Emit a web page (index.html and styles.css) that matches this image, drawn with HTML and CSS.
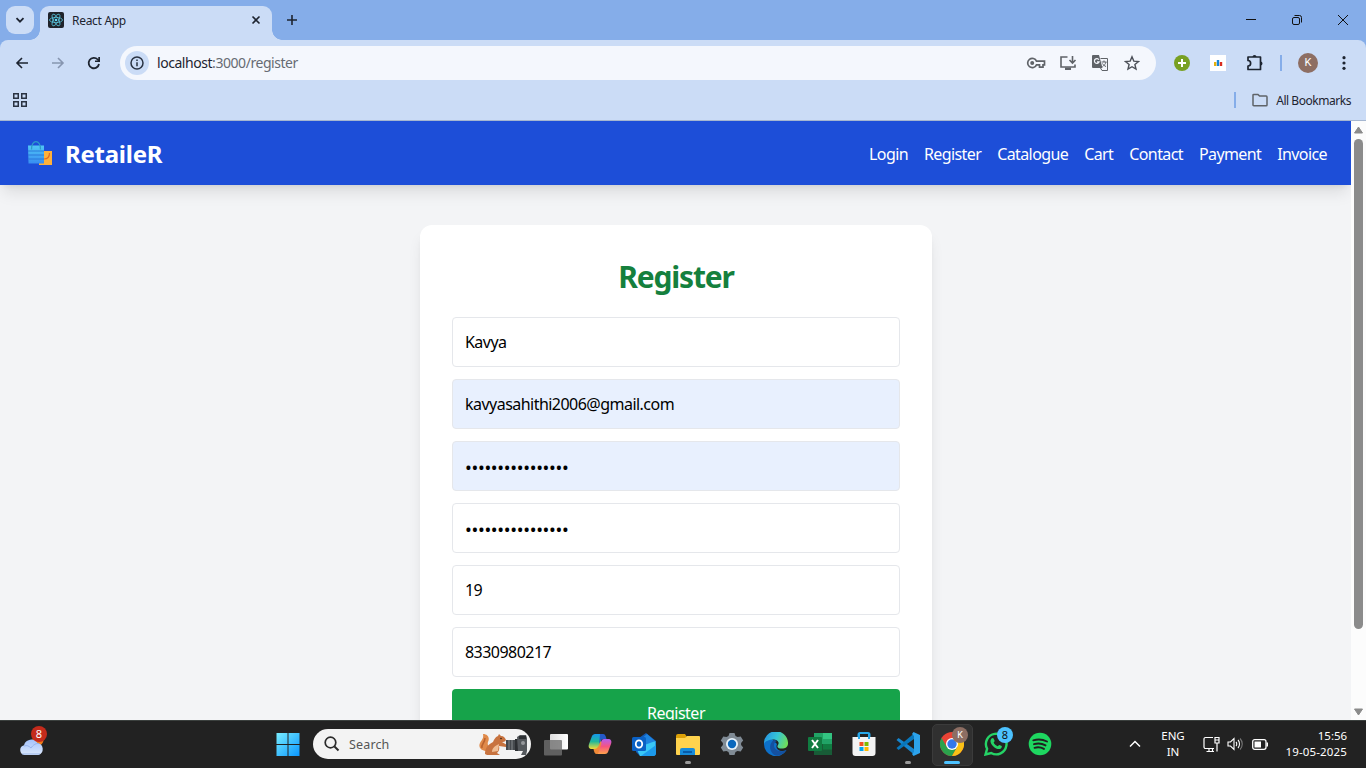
FILE: index.html
```html
<!DOCTYPE html>
<html lang="en">
<head>
<meta charset="utf-8">
<title>React App</title>
<link rel="stylesheet" href="styles.css">
</head>
<body>
<div class="desktop">
  <div class="tabstrip">
    <span class="tab-search"><svg width="10" height="10" viewBox="0 0 10 10"><path d="M1.500 3.200 5 6.700 8.500 3.200" fill="none" stroke="#1d2430" stroke-width="1.800"/></svg></span>
    <div class="tab">
      <svg width="16" height="16" viewBox="0 0 16 16"><rect width="16" height="16" rx="2" fill="#20232a"/><g fill="none" stroke="#58c4dc" stroke-width=".8"><ellipse cx="8" cy="8" rx="6.500" ry="2.600"/><ellipse cx="8" cy="8" rx="6.500" ry="2.600" transform="rotate(60 8 8)"/><ellipse cx="8" cy="8" rx="6.500" ry="2.600" transform="rotate(120 8 8)"/></g><circle cx="8" cy="8" r="1.300" fill="#61dafb"/></svg>
      <span class="tab-title">React App</span>
      <svg width="10" height="10" viewBox="0 0 10 10"><path d="m1.500 1.500 7 7m0-7-7 7" stroke="#1d2430" stroke-width="1.600"/></svg>
    </div>
    <svg class="new-tab" width="12" height="12" viewBox="0 0 12 12"><path d="M6 1v10M1 6h10" stroke="#1d2430" stroke-width="1.600"/></svg>
    <div class="window-controls">
      <svg width="12" height="12" viewBox="0 0 12 12"><path d="M1 5.500h10" stroke="#111"/></svg>
      <svg width="12" height="12" viewBox="0 0 12 12"><g fill="none" stroke="#111"><rect x="1.500" y="3.500" width="7" height="7" rx="1.500"/><path d="M3.500 1.500h5a2 2 0 0 1 2 2v5"/></g></svg>
      <svg width="12" height="12" viewBox="0 0 12 12"><path d="m1 1 10 10M11 1 1 11" stroke="#111"/></svg>
    </div>
  </div>

  <div class="toolbar">
    <div class="nav-buttons">
      <svg width="16" height="16" viewBox="0 0 16 16"><path d="M14 8H3m5-5L3 8l5 5" fill="none" stroke="#1d2430" stroke-width="1.600"/></svg>
      <svg width="16" height="16" viewBox="0 0 16 16"><path d="M2 8h11M8 3l5 5-5 5" fill="none" stroke="#8796b0" stroke-width="1.600"/></svg>
      <svg width="16" height="16" viewBox="0 0 16 16"><path d="M13 9a5.200 5.200 0 1 1-1.300-4.500L13 5.800" fill="none" stroke="#1d2430" stroke-width="1.800"/><path d="M14 2v5H9V5.400h3.300V2z" fill="#1d2430"/></svg>
    </div>
    <div class="omnibox">
      <span class="site-info"><svg width="16" height="16" viewBox="0 0 16 16"><circle cx="8" cy="8" r="6" fill="none" stroke="#2a3342" stroke-width="1.500"/><path d="M8 7.200v4M8 4.500v1.600" stroke="#2a3342" stroke-width="1.500"/></svg></span>
      <span class="url"><b>localhost</b>:3000/register</span>
      <div class="omnibox-actions">
        <svg width="20" height="16" viewBox="0 0 20 16"><g fill="none" stroke="#5f6368" stroke-width="1.700"><path d="M10.500 6.200A4.600 4.600 0 1 0 10.500 9.800h3v2.400H17V9.800h1.500V6.200z"/></g><circle cx="6.200" cy="8" r="2" fill="#5f6368"/></svg>
        <svg width="18" height="16" viewBox="0 0 18 16"><path d="M8.500 2H2v10h14V9.500M13.500 1v7m-3-3 3 3 3-3" fill="none" stroke="#5f6368" stroke-width="1.600"/><path d="M6 12.500h6V15H6z" fill="#5f6368"/></svg>
        <svg width="18" height="18" viewBox="0 0 18 18"><path d="M2 1h6l3.500 13H2a1 1 0 0 1-1-1V2a1 1 0 0 1 1-1z" fill="#5f6368"/><path d="M7.900 5.800a2.400 2.400 0 1 0 .200 2H6" fill="none" stroke="#f4f7fd" stroke-width="1.200"/><path d="M9.500 4.500h7v12H11L9.500 14M10.500 8h5M13 6.500V8m2 0c-.5 2-2 3.500-3.500 4.500M11.500 9.500c1 1.500 2 2.500 3.500 3" fill="none" stroke="#5f6368"/></svg>
        <svg width="16" height="16" viewBox="0 0 16 16"><path d="m8 1.800 1.800 4.300 4.700.4-3.600 3 1.100 4.600L8 11.700l-4 2.400 1.100-4.600-3.600-3 4.700-.4z" fill="none" stroke="#4c5058" stroke-width="1.400"/></svg>
      </div>
    </div>
    <div class="extensions">
      <svg width="16" height="16" viewBox="0 0 16 16"><circle cx="8" cy="8" r="8" fill="#78a022"/><path d="M8 4v8M4 8h8" stroke="#fff" stroke-width="2"/></svg>
      <svg width="16" height="16" viewBox="0 0 16 16"><path fill="#fff" d="M0 0h16v16H0z"/><path d="M5.200 7v4" stroke="#e7b10a" stroke-width="2.400"/><path d="M8 5v6" stroke="#1686d9" stroke-width="2.400"/><path d="M11 7v4" stroke="#d92d20" stroke-width="2.400"/></svg>
      <svg width="18" height="18" viewBox="0 0 18 18"><path d="M2 3h12.500v12.500H2v-3.500c3.500 0 3.500-5.500 0-5.500z" fill="none" stroke="#1d2430" stroke-width="1.700" stroke-linejoin="round"/><path d="M6.500 3a2 2 0 0 1 4 0zM14.500 7.500a2 2 0 0 1 0 4z" fill="#1d2430"/></svg>
      <i class="divider"></i>
      <span class="avatar">K</span>
      <svg width="16" height="16" viewBox="0 0 16 16" fill="#1d2430"><circle cx="8" cy="2.700" r="1.600"/><circle cx="8" cy="8" r="1.600"/><circle cx="8" cy="13.300" r="1.600"/></svg>
    </div>
  </div>

  <div class="bookmarks">
    <svg width="16" height="16" viewBox="0 0 16 16"><path d="M1.750 1.750h4.500v4.500h-4.500zM9.750 1.750h4.500v4.500h-4.500zM1.750 9.750h4.500v4.500h-4.500zM9.750 9.750h4.500v4.500h-4.500z" fill="none" stroke="#2a3342" stroke-width="1.500"/></svg>
    <div class="all-bookmarks">
      <i class="divider"></i>
      <svg width="16" height="14" viewBox="0 0 16 14"><path d="M1 12V2.200a.8.800 0 0 1 .8-.8h4.100l1.700 1.700h6.600a.8.800 0 0 1 .8.800V12a.8.800 0 0 1-.8.800H1.800A.8.800 0 0 1 1 12z" fill="none" stroke="#5f6368" stroke-width="1.500"/></svg>
      <span>All Bookmarks</span>
    </div>
  </div>

  <div class="viewport">
    <div class="page">
      <header class="site-header">
        <div class="brand">
          <svg width="26" height="26" viewBox="0 0 26 26"><defs><linearGradient id="bag" x1="0" y1="0" x2="0" y2="1"><stop stop-color="#51c7f5"/><stop offset="1" stop-color="#378df2"/></linearGradient></defs><path d="M12 11h13v14H12z" fill="#ffb13b"/><path d="M1 5.500h16v18H1.500z" fill="url(#bag)"/><path d="M4.500 9.500C4-1 14-1 13.500 9.500" fill="none" stroke="#2d9cc8" stroke-width="1.200"/><path d="M1 11h16M1 15h16M1 19h16" stroke="#2b79da"/><path d="M22.500 13c0 4-2 6-5.500 6" fill="none" stroke="#e06b26" stroke-width="1.200"/></svg>
          <span>RetaileR</span>
        </div>
        <nav class="site-nav"><a>Login</a><a>Register</a><a>Catalogue</a><a>Cart</a><a>Contact</a><a>Payment</a><a>Invoice</a></nav>
      </header>
      <main class="card">
        <h2>Register</h2>
        <div class="field">Kavya</div>
        <div class="field filled">kavyasahithi2006@gmail.com</div>
        <div class="field filled secret">••••••••••••••••</div>
        <div class="field secret">••••••••••••••••</div>
        <div class="field">19</div>
        <div class="field">8330980217</div>
        <div class="submit">Register</div>
      </main>
    </div>
    <div class="scrollbar">
      <svg width="9" height="8" viewBox="0 0 9 8"><path d="M4.500 1 8.500 7h-8z" fill="#8b8b8b" stroke="#8b8b8b" stroke-linejoin="round"/></svg>
      <i class="thumb"></i>
      <svg width="9" height="8" viewBox="0 0 9 8"><path d="M4.500 7 8.500 1h-8z" fill="#8b8b8b" stroke="#8b8b8b" stroke-linejoin="round"/></svg>
    </div>
  </div>

  <div class="taskbar">
    <div class="weather">
      <svg width="26" height="26" viewBox="0 0 26 26"><defs><linearGradient id="cloud" x1="0" y1="0" x2="0" y2="1"><stop stop-color="#a4c2fb"/><stop offset="1" stop-color="#dbe8fb"/></linearGradient></defs><circle cx="19" cy="9" r="5.500" fill="#ef7b18"/><path d="M5.500 24a5 5 0 0 1-.5-9.800A7.500 7.500 0 0 1 18.500 12a6.200 6.200 0 0 1 1 12z" fill="url(#cloud)"/><path d="M5 15c3-1 5 0 7 2 2-3 5-5 8-4.500M3 23h18" fill="none" stroke="#8ba9e6" stroke-width=".8"/></svg>
      <span class="badge red">8</span>
    </div>
    <div class="task start">
      <svg width="24" height="24" viewBox="0 0 24 24"><defs><linearGradient id="win" x1="0" y1="0" x2="24" y2="24" gradientUnits="userSpaceOnUse"><stop stop-color="#7cf0ff"/><stop offset="1" stop-color="#0895ff"/></linearGradient></defs><path d="M.5 1h11v11H.5zM12.500 1h11v11h-11zM.5 13h11v11H.5zM12.500 13h11v11h-11z" fill="url(#win)"/></svg>
    </div>
    <div class="search">
      <svg width="16" height="16" viewBox="0 0 16 16"><circle cx="6.500" cy="6.500" r="5.300" fill="none" stroke="#2b2b2b" stroke-width="1.700"/><path d="m10.500 10.500 4 4" stroke="#2b2b2b" stroke-width="2"/></svg>
      <span>Search</span>
      <svg class="squirrel" width="50" height="26" viewBox="0 0 50 26"><path d="M8 20C2 20-1 16 1 12c1-3 4-4 3-9 5 0 7 4 5 8-1 3 1 4 1 7z" fill="#e08a4a"/><path d="M3 17c-1-4 3-5 3-10" fill="none" stroke="#b9622e" stroke-width="1.500"/><path d="M6 23c0-5 2-9 8-12 1-2 2-5 5-6l1-2 2 2c3 0 4 2 5 4-1 2-3 2-4 2l5 3-1 2-7-1c1 4-1 6-2 7l3 2H8z" fill="#c8733f"/><path d="M13 21c0-4 3-6 7-8l-1 7z" fill="#f0bd93"/><circle cx="22" cy="7.500" r=".8" fill="#321"/><path d="M27 9h12v10H27z" fill="#45494d"/><path d="M30 9v10M33 9v10" stroke="#85898c"/><path d="M36 8h3v12h-3z" fill="#2c2f32"/><path d="M38 6l3-2h6l1 3v13l-1 4h-5l2-4h-5z" fill="#54585c"/><path d="M40 5h7v3h-7z" fill="#2d3033"/><circle cx="44" cy="12" r="2" fill="#96999c"/></svg>
    </div>
    <div class="task"><svg width="24" height="24" viewBox="0 0 24 24"><defs><linearGradient id="tv"><stop stop-color="#ddd"/><stop offset="1" stop-color="#fff"/></linearGradient></defs><rect x="6" y="2" width="18" height="15.500" rx="1" fill="url(#tv)"/><rect y="8" width="18" height="15.500" rx="1" fill="#707070" fill-opacity=".8"/></svg></div>
    <div class="task"><svg width="24" height="24" viewBox="0 0 24 24"><defs><linearGradient id="co1" x1="0" y1="0" x2="0" y2="1"><stop stop-color="#1597ed"/><stop offset=".5" stop-color="#20b79b"/><stop offset="1" stop-color="#f5dc35"/></linearGradient><linearGradient id="co2" x1="0" y1="0" x2="0" y2="1"><stop stop-color="#b65cf0"/><stop offset=".5" stop-color="#f65480"/><stop offset="1" stop-color="#ffa44b"/></linearGradient></defs><path d="M7 2h8l-4.500 15H4c-3 0-4-2-3-5l3-8c.5-1 1.500-2 3-2z" fill="url(#co1)"/><path d="M12 2h3c2 0 3 2 3.500 5h-3c-2 0-3 1-3.500 3l-1 3z" fill="#2459c9"/><path d="M16 7h4c3 0 4 2 3 5l-3 8c-.5 1-1.500 2-3 2H9l4-12c.5-2 1.500-3 3-3z" fill="url(#co2)"/><path d="M5.500 17c3 0 4-1 5-3l2-5 1 2-2.500 8c-.5 2-1 3-2.500 3s-2.500-2-3-5z" fill="#f18a37"/></svg></div>
    <div class="task"><svg width="24" height="24" viewBox="0 0 24 24"><path d="M4 8 14 1l10 8v12a3 3 0 0 1-3 3H8l-4-4z" fill="#135bb7"/><path d="M9 7 15 2l8 7-9 6z" fill="#1e83df"/><path d="M4 16 23.500 9v12a3 3 0 0 1-3 3H8z" fill="#39c7f6"/><path d="m9 24 15-11v8a3 3 0 0 1-3 3z" fill="#1c9aec"/><rect y="5" width="14" height="14" rx="1.500" fill="#0a61c5"/><ellipse cx="7" cy="12" rx="3.200" ry="3.700" fill="none" stroke="#fff" stroke-width="1.800"/></svg></div>
    <div class="task running"><svg width="24" height="24" viewBox="0 0 24 24"><path d="M0 4a2 2 0 0 1 2-2h7l2 3v5H0z" fill="#dda108"/><path d="M0 6h9l2-2h12a1 1 0 0 1 1 1v17a1 1 0 0 1-1 1H1a1 1 0 0 1-1-1z" fill="#ffd34e"/><path d="M4 18a2 2 0 0 1 2-2h11a2 2 0 0 1 2 2v5H4z" fill="#168bda"/><path d="M7 19h9v2H7z" fill="#075ba9"/></svg></div>
    <div class="task"><svg width="24" height="24" viewBox="0 0 24 24"><path d="M9.500 1h5l1 3 2 1 3.200-.6 2.500 4.200-2.100 2.400v2l2.100 2.400-2.500 4.200-3.200-.6-2 1-1 3h-5l-1-3-2-1-3.200.6-2.500-4.200L2.900 13v-2L.8 8.600l2.500-4.200 3.200.6 2-1z" fill="#808b95"/><circle cx="12" cy="12" r="6" fill="#e7f2fa"/><circle cx="12" cy="12" r="4.200" fill="#0968bd"/></svg></div>
    <div class="task"><svg width="24" height="24" viewBox="0 0 24 24"><defs><linearGradient id="edge" x1="0" y1=".3" x2="1" y2=".6"><stop stop-color="#2595e4"/><stop offset=".5" stop-color="#36c5d4"/><stop offset="1" stop-color="#70dd58"/></linearGradient></defs><path d="M0 12a12 12 0 0 0 22.500 6c-6 3-12-1-9.500-6L7 6C3 7 0 9 0 12z" fill="#0d70c9"/><path d="M0 12a12 12 0 0 1 24-1.500c.3 4-2.500 6-6 6-4 0-5.500-1.500-4-3.500 2-3-1-5.500-5-5.500S1 9 0 12z" fill="url(#edge)"/><path d="M10 8c-5 3-5 10-1 14 2 2 5 2 7 1 3-1 5-3 6.500-5-6 3-13 0-12.500-5 0-2 1-3 3-4-1-.7-2-1-3-1z" fill="#1450a0"/></svg></div>
    <div class="task"><svg width="24" height="24" viewBox="0 0 24 24"><path d="M6 1h18v22H6z" fill="#21a366"/><path d="M15 1h9v6h-9z" fill="#33c481"/><path d="M6 12h9v11H6z" fill="#185c37"/><path d="M15 12h9v11h-9z" fill="#107c41"/><path d="M15 17.500h9V23H6v-5.500z" fill="#185c37"/><rect y="5" width="14" height="14" rx="1" fill="#107c41"/><path d="m4 8 6 8M10 8l-6 8" stroke="#fff" stroke-width="2"/></svg></div>
    <div class="task"><svg width="24" height="24" viewBox="0 0 24 24"><path d="M6.500 6V2.500C6.500 1.600 7.100 1 8 1h8c.9 0 1.500.6 1.500 1.500V6" fill="none" stroke="#28a8ea" stroke-width="2"/><path d="M.5 5h23v16a3 3 0 0 1-3 3h-17a3 3 0 0 1-3-3z" fill="#f3f3f3"/><path d="M6 1.500h2V7H6zM16 1.500h2V7h-2z" fill="#28a8ea"/><path d="M7.500 10h4v4h-4z" fill="#f25022"/><path d="M12.500 10h4v4h-4z" fill="#7fba00"/><path d="M7.500 15h4v4h-4z" fill="#00a4ef"/><path d="M12.500 15h4v4h-4z" fill="#ffb900"/></svg></div>
    <div class="task running"><svg width="24" height="24" viewBox="0 0 24 24"><path d="m.5 8 2-2L18 17v5.500z" fill="#1686cf"/><path d="m.5 16 2 2L18 7V1.500z" fill="#0877bc"/><path d="m17.500 0 6.500 3v18l-6.500 3-1.500-2 2-2V4l-2-2z" fill="#2ca3ec"/></svg></div>
    <div class="task active">
      <svg width="24" height="24" viewBox="0 0 24 24"><circle cx="12" cy="12" r="12" fill="#ea4335"/><path d="M1.600 6A12 12 0 0 0 12 24l5.200-9H6.800z" fill="#2ba24c"/><path d="M22.400 6A12 12 0 0 1 12 24l5.200-9L12 6z" fill="#fbc116"/><circle cx="12" cy="12" r="6" fill="#fff"/><circle cx="12" cy="12" r="4.700" fill="#3478ed"/></svg>
      <span class="badge brown">K</span>
    </div>
    <div class="task">
      <svg width="24" height="24" viewBox="0 0 24 24"><path d="m1.500 22.500 1.600-5.700A10.300 10.300 0 1 1 7.200 21z" fill="none" stroke="#25d366" stroke-width="2.400"/><path d="M7.500 6.500c1-1 2-.5 2.200.2l.9 2c.2.700-.8 1.400-1 1.900.8 1.700 2.200 2.900 4 3.600.7-.2 1.200-1.500 1.900-1.300l2.200 1c.5.500-.2 2.500-1.700 3-2 .7-4.500-.5-6.300-2.200-2.700-2.500-4.400-5.800-2.200-8.200z" fill="#25d366"/></svg>
      <span class="badge blue">8</span>
    </div>
    <div class="task"><svg width="24" height="24" viewBox="0 0 24 24"><circle cx="12" cy="12" r="11.300" fill="#1ed760"/><path d="M5.300 8.300c5-1.500 9.500-1 13.700 1.200M6 12.200c4-1.200 8-.8 11.500 1.200M6.500 15.800c3.500-1 6.500-.6 9.500 1.100" fill="none" stroke="#202020" stroke-width="1.900" stroke-linecap="round"/></svg></div>
    <div class="tray">
      <svg class="chevron" width="12" height="8" viewBox="0 0 12 8"><path d="m1 6.500 5-5 5 5" fill="none" stroke="#fff" stroke-width="1.500"/></svg>
      <div class="lang"><span>ENG</span><span>IN</span></div>
      <svg width="17" height="17" viewBox="0 0 17 17"><g fill="none" stroke="#fff" stroke-width="1.200"><path d="M10 1.500H2.500a1.500 1.500 0 0 0-1.500 1.500v8a1.500 1.500 0 0 0 1.500 1.500H11M3.500 15.500H11M6 13v2M9.500 13v2M12 1.500h4V7h-4zM14 7v8.500M12 4h4"/></g></svg>
      <svg class="volume" width="17" height="14" viewBox="0 0 17 14"><g fill="none" stroke="#fff" stroke-width="1.100"><path d="M1 5h2.500L7 1.500v11L3.500 9H1zM9 5c1 1 1 3 0 4M11 3c2 2 2 6 0 8"/><path d="M13 1.500c3 3 3 8 0 11" stroke="#777"/></g></svg>
      <svg class="battery" width="17" height="11" viewBox="0 0 17 11"><rect x=".7" y=".7" width="13.300" height="9.600" rx="2" fill="none" stroke="#fff" stroke-width="1.300"/><path d="M2.500 2.500H9v6H2.500zM14.500 3.500H16v4h-1.500z" fill="#fff"/></svg>
      <div class="clock"><span>15:56</span><span>19-05-2025</span></div>
    </div>
  </div>
</div>
</body>
</html>
```

FILE: styles.css
```css
* { box-sizing: border-box; }
body { margin: 0; overflow: hidden; font-family: "Noto Sans", "Open Sans", sans-serif; }
svg { display: block; flex: none; }
.desktop { width: 1366px; height: 768px; display: flex; flex-direction: column; background: #85ade9; overflow: hidden; }

.tabstrip { height: 40px; flex: none; display: flex; align-items: center; padding-left: 6px; background: #85ade9; }
.tab-search { width: 28px; height: 28px; border-radius: 9px; background: #cbdcf6; display: flex; align-items: center; justify-content: center; }
.tab { position: relative; width: 232px; height: 34px; margin: 6px 0 0 6px; padding: 0 11px 6px 8px; display: flex; align-items: center; background: #cbdcf6; border-radius: 9px 9px 0 0; }
.tab::before, .tab::after { content: ""; position: absolute; bottom: 0; width: 10px; height: 10px; }
.tab::before { left: -10px; background: radial-gradient(circle at 0 0, transparent 9.500px, #cbdcf6 10px); }
.tab::after { right: -10px; background: radial-gradient(circle at 100% 0, transparent 9.500px, #cbdcf6 10px); }
.tab-title { flex: 1; margin-left: 8px; font-size: 12px; letter-spacing: -.3px; padding-top: 1px; color: #1d2430; }
.new-tab { margin-left: 14px; }
.window-controls { margin-left: auto; display: flex; gap: 34px; padding-right: 17px; }

.toolbar { height: 46px; flex: none; display: flex; align-items: center; padding-left: 14px; background: #cbdcf6; border-radius: 8px 8px 0 0; }
.nav-buttons { display: flex; gap: 20px; width: 106px; }
.omnibox { width: 1036px; height: 34px; border-radius: 17px; background: #f4f7fd; display: flex; align-items: center; padding: 0 16px 0 5px; }
.site-info { width: 24px; height: 24px; border-radius: 50%; background: #cbdcf6; display: flex; align-items: center; justify-content: center; }
.url { margin-left: 8px; padding-bottom: 1px; font-size: 14px; letter-spacing: -.45px; color: #666b73; }
.url b { font-weight: 400; color: #1d2430; }
.omnibox-actions { margin-left: auto; display: flex; align-items: center; gap: 14px; }
.omnibox-actions svg:nth-child(1) { margin-right: -1px; }
.omnibox-actions svg:nth-child(4) { margin-left: 1px; }
.extensions { flex: 1; display: flex; align-items: center; padding-left: 18px; }
.extensions svg + svg { margin-left: 20px; }
.divider { width: 2px; height: 16px; background: #85ade9; }
.extensions .divider { margin-left: 16px; }
.avatar { width: 20px; height: 20px; margin: 0 18px 0 16px; border-radius: 50%; background: #8d6e63; color: #fff; font: 11px/20px Roboto, sans-serif; text-align: center; }

.bookmarks { height: 35px; flex: none; display: flex; align-items: center; justify-content: space-between; padding: 0 15px 6px 12px; background: #cbdcf6; border-bottom: 1px solid #a5b6d0; }
.all-bookmarks { display: flex; align-items: center; font-size: 12px; letter-spacing: -.46px; color: #1d2430; }
.all-bookmarks svg { margin: 0 8px 0 16px; }

.viewport { height: 599px; flex: none; display: flex; overflow: hidden; background: #f3f4f6; }
.page { width: 1351px; height: 599px; overflow: hidden; }
.site-header { height: 64px; display: flex; align-items: center; justify-content: space-between; padding: 0 24px 0 27px; background: #1d4ed8; color: #fff; box-shadow: 0 10px 15px -3px rgba(0,0,0,.1), 0 4px 6px -4px rgba(0,0,0,.1); }
.brand { display: flex; align-items: center; gap: 12px; font-size: 24px; font-weight: 700; letter-spacing: -.25px; }
.site-nav { display: flex; gap: 16px; font-size: 16px; letter-spacing: -.6px; padding-top: 1px; }
.card { width: 512px; height: 560px; margin: 40px 0 0 420px; padding: 32px; background: #fff; border-radius: 12px; box-shadow: 0 10px 15px -3px rgba(0,0,0,.1), 0 4px 6px -4px rgba(0,0,0,.1); }
.card h2 { margin: 0 0 24px; font-size: 30px; line-height: 40px; height: 36px; letter-spacing: -1.200px; text-align: center; color: #15803d; }
.field { height: 50px; margin-bottom: 12px; padding: 0 12px; border: 1px solid #e5e7eb; border-radius: 4px; font-size: 16px; line-height: 49px; letter-spacing: -.53px; color: #000; }
.filled { background: #e8f0fe; }
.secret { font-size: 18px; line-height: 51px; letter-spacing: -.3px; }
.submit { height: 48px; border-radius: 4px; background: #16a34a; color: #fff; font-size: 16px; line-height: 49px; letter-spacing: -.5px; text-align: center; }
.scrollbar { width: 15px; display: flex; flex-direction: column; align-items: center; padding: 5px 0 4px; background: #fcfcfc; }
.thumb { width: 9px; height: 490px; margin: 5px 0 auto; border-radius: 5px; background: #8b8b8b; }

.taskbar { height: 48px; flex: none; display: flex; align-items: center; padding-bottom: 1px; background: #222; border-top: 1px solid #3b403e; color: #fff; }
.weather { position: relative; width: 245px; padding-left: 19px; }
.task { position: relative; width: 44px; height: 46px; display: flex; align-items: center; justify-content: center; }
.start { margin-left: 20px; padding-left: 1px; }
.search { width: 218px; height: 30px; margin: 0 3px 0 4px; padding: 0 2px 0 11px; border-radius: 15px; background: #f3f3f3; display: flex; align-items: center; color: #555; font-size: 12.500px; }
.search span { margin-left: 9px; letter-spacing: .15px; }
.squirrel { margin-left: auto; }
.running::after, .active::after { content: ""; position: absolute; bottom: 3px; left: 19px; width: 6px; height: 3px; border-radius: 2px; background: #9b9b9b; }
.active::before { content: ""; position: absolute; left: 2px; top: 3px; width: 39px; height: 40px; border: 1px solid #3b3b3b; border-radius: 5px; background: #303030; }
.active svg { position: relative; }
.active::after { left: 14px; width: 16px; background: #4cc2ff; }
.badge { position: absolute; width: 16px; height: 16px; border-radius: 50%; text-align: center; font-size: 11px; line-height: 16px; }
.red { left: 31px; top: -5px; background: #c42b1c; }
.brown { left: 22px; top: 6px; background: #8d6e63; font: 9px/16px Roboto, sans-serif; }
.blue { left: 23px; top: 6px; background: #4cc2ff; color: #111; }
.tray { margin-left: auto; display: flex; align-items: center; padding-right: 19px; font-size: 11.500px; line-height: 16px; letter-spacing: -.05px; }
.lang { width: 30px; margin: 0 15px 0 17px; display: flex; flex-direction: column; align-items: center; }
.volume { margin-left: 7px; }
.battery { margin-left: 8px; }
.clock { width: 64px; margin-left: 14px; display: flex; flex-direction: column; align-items: flex-end; white-space: nowrap; }
.clock span:last-child { letter-spacing: .15px; }
```
